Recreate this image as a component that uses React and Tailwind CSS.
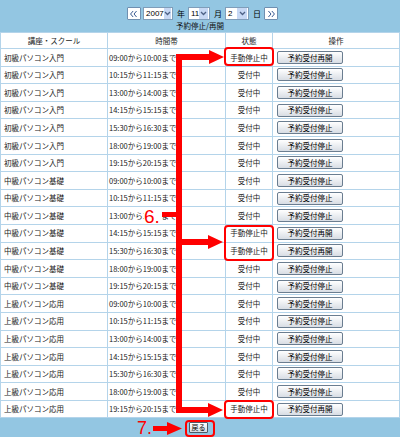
import React from 'react'

const TIMES = [
  '09:00から10:00まで',
  '10:15から11:15まで',
  '13:00から14:00まで',
  '14:15から15:15まで',
  '15:30から16:30まで',
  '18:00から19:00まで',
  '19:15から20:15まで',
]
const COURSES = ['初級パソコン入門', '中級パソコン基礎', '上級パソコン応用']
const STOPPED = [0, 10, 11, 20]

const ROWS = COURSES.flatMap((c) => TIMES.map((t) => ({ course: c, time: t })))

const jp = { fontFamily: '"Noto Sans CJK JP", "Liberation Sans", sans-serif' }

function Chevrons({ dir }) {
  const pts = dir === 'left'
    ? ['6,3 3,6.5 6,10', '10,3 7,6.5 10,10']
    : ['4,3 7,6.5 4,10', '8,3 11,6.5 8,10']
  return (
    <div className="w-[14px] h-[13px] bg-white border border-[#6f8fb0] rounded-[1px] flex items-center justify-center">
      <svg width="12" height="12" viewBox="0 0 14 13">
        {pts.map((p) => (
          <polyline key={p} points={p} fill="none" stroke="#2b4f8a" strokeWidth="1.1" />
        ))}
      </svg>
    </div>
  )
}

function FakeSelect({ value, width }) {
  return (
    <div
      className="h-[13px] bg-white border border-[#7f9db9] flex items-center justify-between"
      style={{ width }}
    >
      <span className="pl-[2px] text-[8px] leading-none text-black" style={{ fontFamily: '"Liberation Sans", sans-serif' }}>
        {value}
      </span>
      <div className="w-[10px] h-[11px] bg-[#c7d8f4] flex items-center justify-center mr-px">
        <svg width="7" height="5" viewBox="0 0 7 5">
          <polyline points="1,1 3.5,3.5 6,1" fill="none" stroke="#4d6185" strokeWidth="1.3" />
        </svg>
      </div>
    </div>
  )
}

function RowButton({ label }) {
  return (
    <div className="ml-[4px] w-[66px] h-[13px] border border-[#6a7d90] rounded-[2px] bg-gradient-to-b from-white to-[#d8dde4] flex items-center justify-center text-[7.5px] leading-none text-black">
      {label}
    </div>
  )
}

export default function App() {
  return (
    <div className="relative w-[400px] h-[437px] bg-[#93c6e2] overflow-hidden" style={jp}>
      {/* date picker */}
      <div className="pt-[7px] pl-[127px] h-[20px] flex items-start">
        <Chevrons dir="left" />
        <div className="ml-[2px]"><FakeSelect value="2007" width={30} /></div>
        <span className="ml-[4px] text-[8px] leading-[13px] text-black">年</span>
        <div className="ml-[3px]"><FakeSelect value="11" width={22} /></div>
        <span className="ml-[4px] text-[8px] leading-[13px] text-black">月</span>
        <div className="ml-[3px]"><FakeSelect value="2" width={24} /></div>
        <span className="ml-[4px] text-[8px] leading-[13px] text-black">日</span>
        <div className="ml-[3px]"><Chevrons dir="right" /></div>
      </div>

      {/* title */}
      <div className="h-[12px] flex items-center justify-center text-[7.5px] leading-none text-[#111]">
        予約停止/再開
      </div>

      {/* table */}
      <div className="grid grid-cols-[106px_117px_46px_126px] gap-px p-px bg-[#b4d4ea] text-[7.5px] leading-none text-[#1a1a1a]">
        {['講座・スクール', '時間帯', '状態', '操作'].map((h) => (
          <div key={h} className="h-[15px] bg-white flex items-center justify-center">{h}</div>
        ))}
        {ROWS.map((r, i) => {
          const stopped = STOPPED.includes(i)
          return (
            <React.Fragment key={i}>
              <div className="h-[16.6px] bg-white flex items-center pl-[3px]">{r.course}</div>
              <div className="h-[16.6px] bg-white flex items-center pl-[1px]">{r.time}</div>
              <div className="h-[16.6px] bg-white flex items-center justify-center">
                {stopped ? '手動停止中' : '受付中'}
              </div>
              <div className="h-[16.6px] bg-white flex items-center">
                <RowButton label={stopped ? '予約受付再開' : '予約受付停止'} />
              </div>
            </React.Fragment>
          )
        })}
      </div>

      {/* back button */}
      <div className="pt-[4px] pl-[189px]">
        <div className="w-[19px] h-[11px] border border-[#4d5966] rounded-[1px] bg-gradient-to-b from-white to-[#d6dbe2] flex items-center justify-center text-[7px] leading-none text-black">
          戻る
        </div>
      </div>

      {/* red annotations */}
      <svg className="absolute inset-0 pointer-events-none" width="400" height="437" viewBox="0 0 400 437">
        <g fill="#ff0000">
          <rect x="176" y="54" width="6" height="359" />
          <rect x="176" y="54" width="35" height="6" />
          <polygon points="209,50 224,57 209,64" />
          <rect x="182" y="239" width="28" height="6" />
          <polygon points="208,235 223,242 208,249" />
          <rect x="176" y="407" width="34" height="6" />
          <polygon points="208,403 223,410 208,417" />
          <rect x="161" y="212" width="16" height="5" />
          <rect x="153" y="426" width="16" height="5" />
          <polygon points="167,422 182,428.5 167,435" />
        </g>
        <rect x="144" y="207" width="18" height="17" fill="#fff" />
        <text x="144" y="223" fill="#ff0000" fontSize="19" fontFamily="Liberation Sans, sans-serif">6.</text>
        <text x="137" y="434" fill="#ff0000" fontSize="18" fontFamily="Liberation Sans, sans-serif">7.</text>
        <g fill="none" stroke="#ff0000" strokeWidth="2">
          <rect x="225" y="48" width="48" height="17" rx="3" />
          <rect x="225" y="226" width="48" height="34" rx="3" />
          <rect x="225" y="401" width="48" height="17" rx="3" />
          <rect x="186" y="421" width="28" height="15" rx="3" />
        </g>
      </svg>
    </div>
  )
}
